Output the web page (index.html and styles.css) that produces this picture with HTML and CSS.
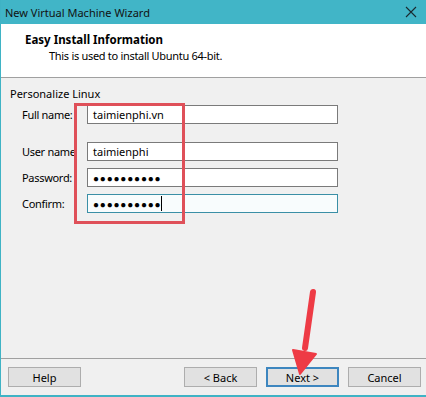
FILE: index.html
```html
<!DOCTYPE html>
<html>
<head>
<meta charset="utf-8">
<link rel="stylesheet" href="styles.css">
</head>
<body>
<div class="window">
  <div class="titlebar">
    <span class="title">New Virtual Machine Wizard</span>
    <svg class="close" width="12" height="12" viewBox="0 0 12 12"><path d="M1 1L11 11M11 1L1 11" stroke="#1a2a30" stroke-width="1.1" fill="none"/></svg>
  </div>
  <div class="header">
    <div class="h-title">Easy Install Information</div>
    <div class="h-sub">This is used to install Ubuntu 64-bit.</div>
  </div>
  <div class="content">
    <div class="group-label">Personalize Linux</div>
    <div class="form">
      <div class="row first">
        <label class="lbl">Full name:</label>
        <div class="field">taimienphi.vn</div>
      </div>
      <div class="row">
        <label class="lbl">User name</label>
        <div class="field">taimienphi</div>
      </div>
      <div class="row">
        <label class="lbl">Password:</label>
        <div class="field dots">●●●●●●●●●●</div>
      </div>
      <div class="row">
        <label class="lbl">Confirm:</label>
        <div class="field dots focused">●●●●●●●●●●<span class="caret"></span></div>
      </div>
    </div>
  </div>
  <div class="footer">
    <button class="btn">Help</button>
    <div class="nav">
      <button class="btn">&lt; Back</button>
      <button class="btn primary">Next &gt;</button>
      <button class="btn">Cancel</button>
    </div>
  </div>
  <div class="highlight"></div>
  <svg class="arrow" width="40" height="100" viewBox="0 0 40 100">
    <path d="M25 6 L17 62" stroke="#ee3b45" stroke-width="6" stroke-linecap="round" fill="none"/>
    <path d="M5 64 L28 68 L12 88 Z" fill="#ee3b45" stroke="#ee3b45" stroke-width="2" stroke-linejoin="round"/>
  </svg>
</div>
</body>
</html>
```
FILE: styles.css
```css
* { box-sizing: border-box; }
body { margin: 0; font-family: "Noto Sans", "Open Sans", sans-serif; font-size: 11px; color: #000; }
.window {
  position: relative;
  width: 426px;
  height: 397px;
  background: #f0f0f0;
  border-left: 1px solid #3fb3c5;
  border-bottom: 2px solid #3fb3c5;
  display: flex;
  flex-direction: column;
  overflow: hidden;
}
.titlebar {
  height: 24px;
  margin-left: -1px;
  background: #41b5c7;
  display: flex;
  align-items: center;
  justify-content: space-between;
  padding: 0 9px 0 5px;
  font-size: 11px;
  color: #111;
}
.close { display: block; }
.header {
  height: 54px;
  background: #fff;
  border-bottom: 1px solid #a0a0a0;
  padding: 8px 0 0 24px;
}
.h-title { font-weight: bold; line-height: 16px; font-size: 11.5px; }
.h-sub { padding-left: 24px; line-height: 16px; letter-spacing: -0.3px; }
.content {
  height: 281px;
  padding: 9px 0 0 9px;
  border-bottom: 1px solid #a0a0a0;
}
.group-label { line-height: 14px; }
.form {
  margin-top: 4px;
  display: flex;
  flex-direction: column;
  gap: 7px;
}
.row { display: flex; align-items: center; height: 19px; }
.row.first { margin-bottom: 11px; }
.lbl { width: 77px; padding-left: 12px; letter-spacing: -0.3px; }
.field {
  width: 251px;
  height: 19px;
  border: 1px solid #7a7a7a;
  background: #fff;
  padding-left: 5px;
  display: flex;
  align-items: center;
  font-size: 11px;
}
.field.dots { font-size: 10px; letter-spacing: 0.8px; }
.field.focused { border-color: #3a8fa6; background: #f8fcfd; }
.caret { display: inline-block; width: 1px; height: 15px; background: #000; margin-left: 0; }
.footer {
  flex: 1;
  display: flex;
  justify-content: space-between;
  align-items: flex-start;
  padding: 8px 5px 0 7px;
}
.nav { display: flex; gap: 9px; }
.btn {
  width: 73px;
  height: 20px;
  background: #e1e1e1;
  border: 1px solid #adadad;
  font-family: inherit;
  font-size: 11px;
  color: #000;
  padding: 0;
}
.btn.primary { border: 2px solid #3d86bf; }
.highlight {
  position: absolute;
  left: 73px;
  top: 103px;
  width: 111px;
  height: 121px;
  border: 3px solid #df5059;
}
.arrow { position: absolute; left: 287px; top: 286px; }
```
